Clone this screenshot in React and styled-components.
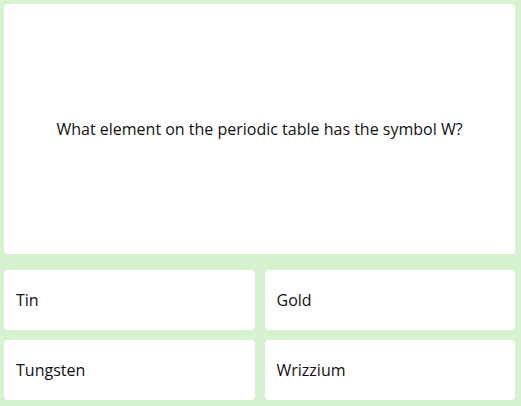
import React from 'react';
import styled, { createGlobalStyle } from 'styled-components';

const GlobalStyle = createGlobalStyle`
  html, body {
    margin: 0;
    padding: 0;
    background: #d7f2d0;
  }
  body {
    font-family: "Open Sans", "Liberation Sans", sans-serif;
    color: #111;
  }
`;

const Page = styled.div`
  width: 511px;
  padding: 4px 6px 6px 4px;
  display: flex;
  flex-direction: column;
  gap: 16px;
`;

const QuestionCard = styled.div`
  height: 250px;
  background: #fff;
  border-radius: 4px;
  display: flex;
  align-items: center;
  justify-content: center;
  font-size: 16px;
`;

const Answers = styled.div`
  display: grid;
  grid-template-columns: 1fr 1fr;
  gap: 10px;
`;

const Answer = styled.div`
  height: 60px;
  background: #fff;
  border-radius: 4px;
  display: flex;
  align-items: center;
  padding: 0 12px;
  font-size: 16px;
`;

const answers = ['Tin', 'Gold', 'Tungsten', 'Wrizzium'];

export default function App() {
  return (
    <>
      <GlobalStyle />
      <Page>
        <QuestionCard>What element on the periodic table has the symbol W?</QuestionCard>
        <Answers>
          {answers.map((a) => (
            <Answer key={a}>{a}</Answer>
          ))}
        </Answers>
      </Page>
    </>
  );
}
